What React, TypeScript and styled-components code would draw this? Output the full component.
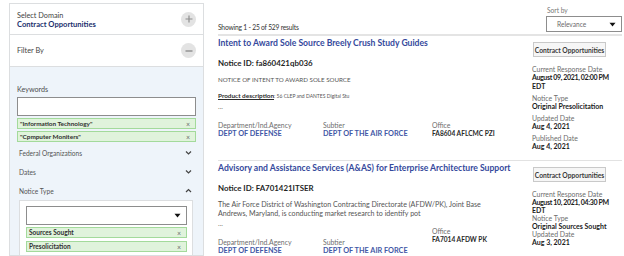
import React from "react";
import styled, { createGlobalStyle } from "styled-components";

const FONT = `Lato, "Liberation Sans", Arial, sans-serif`;

const Global = createGlobalStyle`
  html, body { margin: 0; padding: 0; background: #ffffff; }
  body { font-family: ${FONT}; color: #1b1b1b; }
  * { box-sizing: border-box; }
`;

const Page = styled.div`
  display: flex;
  gap: 14px;
  height: 256px;
  overflow: hidden;
  padding: 0 2px 0 9px;
`;

/* ---------------- Sidebar ---------------- */
const Sidebar = styled.aside`
  width: 195px;
  flex: none;
  margin-top: 3px;
  border: 1px solid #dcdee0;
  display: flex;
  flex-direction: column;
  overflow: hidden;
`;

const SectionHeader = styled.div<{ $h: number }>`
  flex: none;
  height: ${(p) => p.$h}px;
  display: flex;
  align-items: center;
  justify-content: space-between;
  padding: 0 7px 0 7px;
  border-bottom: 1px solid #dcdee0;
  background: #ffffff;
`;

const HeaderText = styled.div`
  display: flex;
  flex-direction: column;
  padding-top: 1px;
`;

const SmallLabel = styled.span`
  font-size: 7.3px;
  line-height: 9px;
  color: #3f3f3f;
`;

const DomainValue = styled.span`
  font-size: 7.6px;
  line-height: 9px;
  font-weight: 700;
  color: #1b2f6e;
`;

const FilterTitle = styled.span`
  font-size: 7.3px;
  color: #444;
`;

const CircleButton = styled.div`
  width: 15px;
  height: 15px;
  border-radius: 50%;
  background: #e3e3e3;
  display: flex;
  align-items: center;
  justify-content: center;
`;

const FilterBody = styled.div`
  flex: 1 0 auto;
  background: #eef4fa;
  padding: 18px 7px 0 7px;
  display: flex;
  flex-direction: column;
`;

const FieldLabel = styled.div`
  font-size: 7.2px;
  line-height: 9px;
  color: #4d4d4d;
  margin-bottom: 3px;
`;

const TextInput = styled.div`
  height: 19px;
  background: #fff;
  border: 1px solid #8d8d8d;
`;

const Tag = styled.div<{ $gap?: number; $size?: number }>`
  flex: none;
  height: 11px;
  margin-top: ${(p) => p.$gap ?? 2}px;
  background: #e0f3dc;
  border: 1px solid #a3da9b;
  display: flex;
  align-items: center;
  justify-content: space-between;
  padding: 0 5px 0 2px;
  font-size: ${(p) => p.$size ?? 6.4}px;
  font-weight: 700;
  color: #2f2f2f;
`;

const TagX = styled.span`
  font-size: 7px;
  font-weight: 400;
  color: #6b6b6b;
`;

const AccordionGroup = styled.div`
  margin-top: 1px;
  display: flex;
  flex-direction: column;
`;

const AccordionRow = styled.div`
  height: 19px;
  display: flex;
  align-items: center;
  justify-content: space-between;
  padding: 0 4px 0 2px;
  font-size: 6.6px;
  color: #555;
`;

const NoticeBox = styled.div`
  margin: 0 3px 0 2px;
  background: #ffffff;
  border: 1px solid #dcdee0;
  padding: 5px 5px 6px 6px;
`;

const SelectBox = styled.div<{ $w?: number; $h: number }>`
  height: ${(p) => p.$h}px;
  ${(p) => (p.$w ? `width: ${p.$w}px;` : "")}
  background: #fff;
  border: 1px solid #8d8d8d;
  display: flex;
  align-items: center;
  justify-content: space-between;
  padding: 0 5px 0 10px;
  font-size: 6.6px;
  color: #6b6b6b;
`;

/* ---------------- Main ---------------- */
const Main = styled.main`
  flex: 1;
  min-width: 0;
  display: flex;
  flex-direction: column;
`;

const TopBar = styled.div`
  flex: none;
  height: 36px;
  display: flex;
  align-items: flex-end;
  justify-content: space-between;
  padding-bottom: 2px;
  border-bottom: 2px solid #e4e4e4;
`;

const Showing = styled.span`
  font-size: 6.7px;
  line-height: 9px;
  color: #333;
  letter-spacing: -0.2px;
`;

const SortGroup = styled.div`
  display: flex;
  flex-direction: column;
`;

const SortLabel = styled.span`
  font-size: 6.6px;
  line-height: 9px;
  color: #777;
  margin-bottom: 1px;
  padding-left: 1px;
`;

const Card = styled.article`
  flex: none;
  display: grid;
  grid-template-columns: 1fr 90px;
  column-gap: 7px;
  padding: 2px 0 0 0;
  height: 125px;
  border-bottom: 1px solid #e2e2e2;
`;

const CardMain = styled.div`
  display: flex;
  flex-direction: column;
  min-width: 0;
`;

const Title = styled.h2`
  margin: 0;
  font-size: 8.6px;
  line-height: 11px;
  font-weight: 700;
  color: #34499c;
  white-space: nowrap;
`;

const NoticeId = styled.div`
  margin-top: 9px;
  font-size: 7.9px;
  line-height: 10px;
  font-weight: 700;
  color: #1f1f1f;
`;

const Description = styled.p<{ $gap: number }>`
  margin: ${(p) => p.$gap}px 0 0 0;
  font-size: 7.1px;
  line-height: 9px;
  color: #555;
`;

const CapsLine = styled.span`
  display: block;
  font-size: 6.2px;
`;

const ProductLine = styled.span`
  display: block;
  margin-top: 7px;
  font-size: 5px;
  color: #555;
`;

const ProductLabel = styled.span`
  font-size: 6.4px;
  font-weight: 700;
  color: #2b2b2b;
  text-decoration: underline;
`;

const Ellipsis = styled.div`
  margin-top: 1px;
  font-size: 7px;
  line-height: 9px;
  color: #777;
`;

const InfoRow = styled.div`
  margin-top: 10px;
  display: grid;
  grid-template-columns: 105px 109px auto;
`;

const InfoCell = styled.div<{ $shift?: number }>`
  display: flex;
  flex-direction: column;
  margin-top: ${(p) => p.$shift ?? 0}px;
`;

const InfoLabel = styled.span`
  font-size: 6.9px;
  line-height: 8px;
  color: #6d6d6d;
`;

const AgencyValue = styled.span`
  font-size: 7.3px;
  line-height: 9px;
  font-weight: 700;
  color: #3f58a6;
`;

const OfficeValue = styled.span`
  font-size: 6.6px;
  line-height: 9px;
  font-weight: 700;
  color: #2a2a2a;
`;

const CardSide = styled.div`
  padding-top: 4px;
  display: flex;
  flex-direction: column;
  align-items: flex-start;
`;

const DomainButton = styled.div`
  flex: none;
  height: 15px;
  width: 73px;
  margin-left: 1px;
  margin-bottom: 5px;
  border: 1px solid #c9c9c9;
  background: #f6f6f6;
  display: flex;
  align-items: center;
  justify-content: center;
  font-size: 6.7px;
  font-weight: 700;
  color: #3a3a3a;
  white-space: nowrap;
`;

const Field = styled.div<{ $gap: number }>`
  margin-top: ${(p) => p.$gap}px;
  display: flex;
  flex-direction: column;
`;

const FieldName = styled.span`
  font-size: 6.9px;
  line-height: 8px;
  color: #6d6d6d;
`;

const FieldValue = styled.span<{ $line: number; $tight?: boolean }>`
  font-size: 7px;
  line-height: ${(p) => p.$line}px;
  font-weight: 700;
  color: #1b1b1b;
  white-space: nowrap;
  letter-spacing: ${(p) => (p.$tight ? "-0.35px" : "0")};
`;

/* ---------------- Icons ---------------- */
const Plus = () => (
  <svg width="8" height="8" viewBox="0 0 8 8">
    <path d="M4 0.5V7.5M0.5 4H7.5" stroke="#8e8e8e" strokeWidth="1.2" />
  </svg>
);
const Minus = () => (
  <svg width="8" height="8" viewBox="0 0 8 8">
    <path d="M0.5 4H7.5" stroke="#8e8e8e" strokeWidth="1.4" />
  </svg>
);
const Chevron = ({ up }: { up?: boolean }) => (
  <svg width="7" height="5" viewBox="0 0 7 5">
    <path
      d={up ? "M1 4L3.5 1.5L6 4" : "M1 1.5L3.5 4L6 1.5"}
      stroke="#444"
      strokeWidth="1.2"
      fill="none"
    />
  </svg>
);
const Caret = () => (
  <svg width="7" height="5" viewBox="0 0 7 5">
    <path d="M0.5 0.8H6.5L3.5 4.4Z" fill="#111" />
  </svg>
);

type Result = {
  title: string;
  noticeId: string;
  desc: React.ReactNode;
  descGap: number;
  office: string;
  officeShift?: number;
  response: string[];
  noticeType: string;
  fields: { name: string; value: string }[];
  fieldGap: number;
  valueLine: number;
};

const results: Result[] = [
  {
    title: "Intent to Award Sole Source Breely Crush Study Guides",
    noticeId: "Notice ID: fa860421qb036",
    descGap: 7,
    desc: (
      <>
        <CapsLine>NOTICE OF INTENT TO AWARD SOLE SOURCE</CapsLine>
        <ProductLine>
          <ProductLabel>Product description</ProductLabel>: 56 CLEP and DANTES Digital Stu
        </ProductLine>
      </>
    ),
    office: "FA8604 AFLCMC PZI",
    response: ["August 09, 2021, 02:00 PM", "EDT"],
    noticeType: "Original Presolicitation",
    fields: [
      { name: "Updated Date", value: "Aug 4, 2021" },
      { name: "Published Date", value: "Aug 4, 2021" },
    ],
    fieldGap: 3,
    valueLine: 9,
  },
  {
    title: "Advisory and Assistance Services (A&AS) for Enterprise Architecture Support",
    noticeId: "Notice ID: FA701421ITSER",
    descGap: 7,
    desc: (
      <>
        The Air Force District of Washington Contracting Directorate (AFDW/PK), Joint Base
        <br />
        Andrews, Maryland, is conducting market research to identify pot
      </>
    ),
    office: "FA7014 AFDW PK",
    officeShift: -11,
    response: ["August 10, 2021, 04:30 PM", "EDT"],
    noticeType: "Original Sources Sought",
    fields: [{ name: "Updated Date", value: "Aug 3, 2021" }],
    fieldGap: 0,
    valueLine: 8,
  },
];

export default function App() {
  return (
    <>
      <Global />
      <Page>
        <Sidebar>
          <SectionHeader $h={31}>
            <HeaderText>
              <SmallLabel>Select Domain</SmallLabel>
              <DomainValue>Contract Opportunities</DomainValue>
            </HeaderText>
            <CircleButton>
              <Plus />
            </CircleButton>
          </SectionHeader>
          <SectionHeader $h={32}>
            <FilterTitle>Filter By</FilterTitle>
            <CircleButton>
              <Minus />
            </CircleButton>
          </SectionHeader>
          <FilterBody>
            <FieldLabel>Keywords</FieldLabel>
            <TextInput />
            <Tag>
              "Information Technology"<TagX>×</TagX>
            </Tag>
            <Tag>
              "Cpmputer Moniters"<TagX>×</TagX>
            </Tag>
            <AccordionGroup>
              <AccordionRow>
                Federal Organizations
                <Chevron />
              </AccordionRow>
              <AccordionRow>
                Dates
                <Chevron />
              </AccordionRow>
              <AccordionRow>
                Notice Type
                <Chevron up />
              </AccordionRow>
            </AccordionGroup>
            <NoticeBox>
              <SelectBox $h={19}>
                <span />
                <Caret />
              </SelectBox>
              <Tag $size={6.5}>
                Sources Sought<TagX>×</TagX>
              </Tag>
              <Tag $size={6.5} $gap={3}>
                Presolicitation<TagX>×</TagX>
              </Tag>
            </NoticeBox>
          </FilterBody>
        </Sidebar>

        <Main>
          <TopBar>
            <Showing>Showing 1 - 25 of 529 results</Showing>
            <SortGroup>
              <SortLabel>Sort by</SortLabel>
              <SelectBox $w={76} $h={16}>
                Relevance
                <Caret />
              </SelectBox>
            </SortGroup>
          </TopBar>

          {results.map((r) => (
            <Card key={r.noticeId}>
              <CardMain>
                <Title>{r.title}</Title>
                <NoticeId>{r.noticeId}</NoticeId>
                <Description $gap={r.descGap}>{r.desc}</Description>
                <Ellipsis>...</Ellipsis>
                <InfoRow>
                  <InfoCell>
                    <InfoLabel>Department/Ind.Agency</InfoLabel>
                    <AgencyValue>DEPT OF DEFENSE</AgencyValue>
                  </InfoCell>
                  <InfoCell>
                    <InfoLabel>Subtier</InfoLabel>
                    <AgencyValue>DEPT OF THE AIR FORCE</AgencyValue>
                  </InfoCell>
                  <InfoCell $shift={r.officeShift}>
                    <InfoLabel>Office</InfoLabel>
                    <OfficeValue>{r.office}</OfficeValue>
                  </InfoCell>
                </InfoRow>
              </CardMain>
              <CardSide>
                <DomainButton>Contract Opportunities</DomainButton>
                <Field $gap={3}>
                  <FieldName>Current Response Date</FieldName>
                  {r.response.map((line, i) => (
                    <FieldValue key={line} $line={r.valueLine} $tight={i === 0}>
                      {line}
                    </FieldValue>
                  ))}
                </Field>
                <Field $gap={r.fieldGap}>
                  <FieldName>Notice Type</FieldName>
                  <FieldValue $line={r.valueLine}>{r.noticeType}</FieldValue>
                </Field>
                {r.fields.map((f) => (
                  <Field key={f.name} $gap={r.fieldGap}>
                    <FieldName>{f.name}</FieldName>
                    <FieldValue $line={r.valueLine}>{f.value}</FieldValue>
                  </Field>
                ))}
              </CardSide>
            </Card>
          ))}
        </Main>
      </Page>
    </>
  );
}
